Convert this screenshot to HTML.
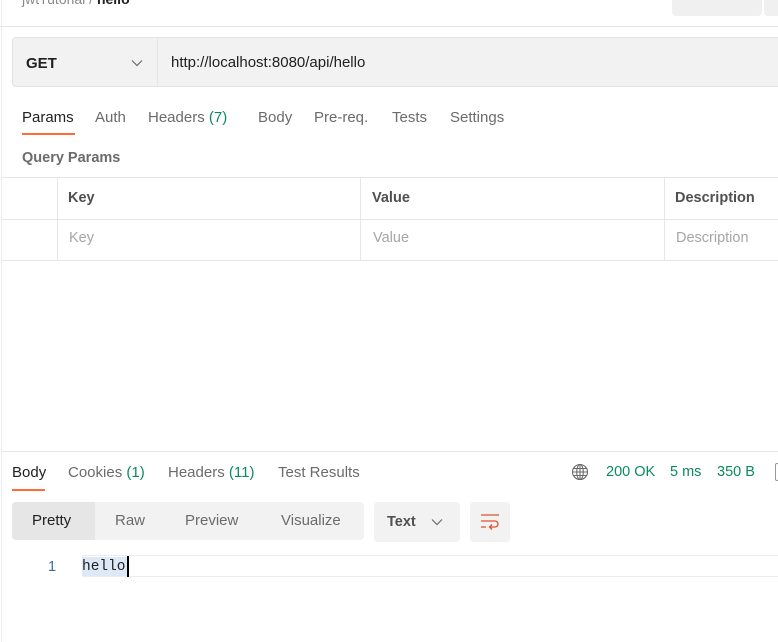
<!DOCTYPE html>
<html><head><style>
*{box-sizing:border-box;margin:0;padding:0}
body{width:778px;height:642px;overflow:hidden;background:#fff;font-family:"Liberation Sans",sans-serif;position:relative;color:#212121}
.a{position:absolute;white-space:nowrap}
.tab{font-size:15px;color:#6b6b6b}
.line{position:absolute;background:#e6e6e6}
</style></head><body>
<div class="line" style="left:1px;top:0;width:1px;height:642px;background:#ededed"></div>
<div class="a" style="left:22px;top:-9px;font-size:14px;color:#8a8a8a">jwtTutorial / <b style="color:#212121">hello</b></div>
<div class="a" style="left:672px;top:-10px;width:90px;height:26px;background:#f0f0f0;border-radius:4px"></div>
<div class="a" style="left:764px;top:-10px;width:20px;height:26px;background:#f0f0f0;border-radius:4px"></div>
<div class="line" style="left:0;top:26px;width:778px;height:1px"></div>

<div class="a" style="left:12px;top:37px;width:780px;height:50px;background:#f2f2f2;border:1px solid #e3e3e3;border-radius:4px"></div>
<div class="line" style="left:157px;top:38px;width:1px;height:48px"></div>
<div class="a" style="left:26px;top:55px;font-size:15px;font-weight:bold;color:#212121">GET</div>
<svg class="a" style="left:131px;top:59px" width="12" height="8"><path d="M1 1.5L6 6.5L11 1.5" fill="none" stroke="#6b6b6b" stroke-width="1.2"/></svg>
<div class="a" style="left:171px;top:54px;font-size:15px;color:#212121">http://localhost:8080/api/hello</div>

<div class="a tab" style="left:22px;top:109px;color:#212121">Params</div>
<div class="a" style="left:22px;top:133px;width:53px;height:2px;background:#ff6c37"></div>
<div class="a tab" style="left:95px;top:109px">Auth</div>
<div class="a tab" style="left:148px;top:109px">Headers <span style="color:#0b8a5c">(7)</span></div>
<div class="a tab" style="left:258px;top:109px">Body</div>
<div class="a tab" style="left:314px;top:109px">Pre-req.</div>
<div class="a tab" style="left:392px;top:109px">Tests</div>
<div class="a tab" style="left:450px;top:109px">Settings</div>
<div class="a" style="left:22px;top:150px;font-size:14.5px;font-weight:bold;color:#6b6b6b">Query Params</div>

<div class="line" style="left:2px;top:177px;width:776px;height:1px"></div>
<div class="line" style="left:2px;top:219px;width:776px;height:1px"></div>
<div class="line" style="left:2px;top:260px;width:776px;height:1px"></div>
<div class="line" style="left:57px;top:178px;width:1px;height:82px"></div>
<div class="line" style="left:360px;top:178px;width:1px;height:82px"></div>
<div class="line" style="left:664px;top:178px;width:1px;height:82px"></div>
<div class="a" style="left:68px;top:190px;font-size:14.5px;font-weight:bold;color:#505050">Key</div>
<div class="a" style="left:372px;top:190px;font-size:14.5px;font-weight:bold;color:#505050">Value</div>
<div class="a" style="left:675px;top:190px;font-size:14.5px;font-weight:bold;color:#505050">Description</div>
<div class="a" style="left:69px;top:230px;font-size:14.5px;color:#a6a6a6">Key</div>
<div class="a" style="left:373px;top:230px;font-size:14.5px;color:#a6a6a6">Value</div>
<div class="a" style="left:676px;top:230px;font-size:14.5px;color:#a6a6a6">Description</div>

<div class="line" style="left:2px;top:451px;width:776px;height:1px"></div>
<div class="a tab" style="left:12px;top:464px;color:#212121">Body</div>
<div class="a" style="left:12px;top:489px;width:33px;height:2px;background:#ff6c37"></div>
<div class="a tab" style="left:68px;top:464px">Cookies <span style="color:#0b8a5c">(1)</span></div>
<div class="a tab" style="left:168px;top:464px">Headers <span style="color:#0b8a5c">(11)</span></div>
<div class="a tab" style="left:278px;top:464px">Test Results</div>
<svg class="a" style="left:571px;top:463px" width="18" height="18" viewBox="0 0 18 18" fill="none" stroke="#6b6b6b" stroke-width="1.1"><circle cx="9" cy="9" r="7.5"/><ellipse cx="9" cy="9" rx="3.3" ry="7.5"/><path d="M1.5 9h15M2.5 5.5h13M2.5 12.5h13M9 1.5v15"/></svg>
<div class="a" style="left:606px;top:464px;font-size:14.5px;color:#0b8a5c">200 OK</div>
<div class="a" style="left:670px;top:464px;font-size:14.5px;color:#0b8a5c">5 ms</div>
<div class="a" style="left:717px;top:464px;font-size:14.5px;color:#0b8a5c">350 B</div>
<div class="a" style="left:775px;top:463px;width:6px;height:18px;border:1px solid #999;border-radius:2px"></div>

<div class="a" style="left:12px;top:502px;width:352px;height:38px;background:#f2f2f2;border-radius:4px"></div>
<div class="a" style="left:12px;top:502px;width:83px;height:38px;background:#e6e6e6;border-radius:4px 0 0 4px"></div>
<div class="a tab" style="left:32px;top:512px;color:#212121">Pretty</div>
<div class="a tab" style="left:115px;top:512px">Raw</div>
<div class="a tab" style="left:185px;top:512px">Preview</div>
<div class="a tab" style="left:281px;top:512px">Visualize</div>
<div class="a" style="left:374px;top:502px;width:86px;height:40px;background:#f2f2f2;border-radius:4px"></div>
<div class="a" style="left:387px;top:514px;font-size:14.5px;font-weight:bold;color:#505050">Text</div>
<svg class="a" style="left:431px;top:518px" width="12" height="8"><path d="M1 1.5L6 6.5L11 1.5" fill="none" stroke="#6b6b6b" stroke-width="1.2"/></svg>
<div class="a" style="left:470px;top:502px;width:40px;height:40px;background:#f2f2f2;border-radius:4px"></div>
<svg class="a" style="left:480px;top:513px" width="20" height="18" viewBox="0 0 20 18" fill="none" stroke="#e0532b" stroke-width="1.3"><path d="M1 2h18M1 8h14a3 3 0 0 1 0 6h-5M12 11.5l-2.5 2.5 2.5 2.5M1 14h5"/></svg>

<div class="line" style="left:82px;top:555px;width:696px;height:1px;background:#ececec"></div>
<div class="line" style="left:82px;top:576px;width:696px;height:1px;background:#ececec"></div>
<div class="a" style="left:48px;top:559px;font-size:14.5px;color:#3a6f8f">1</div>
<div class="a" style="left:82px;top:557px;width:45px;height:19px;background:#dde9f7"></div>
<div class="a" style="left:82px;top:559px;font-family:'Liberation Mono',monospace;font-size:14.5px;color:#212121">hello</div>
<div class="a" style="left:127px;top:556px;width:2px;height:21px;background:#000"></div>
</body></html>
